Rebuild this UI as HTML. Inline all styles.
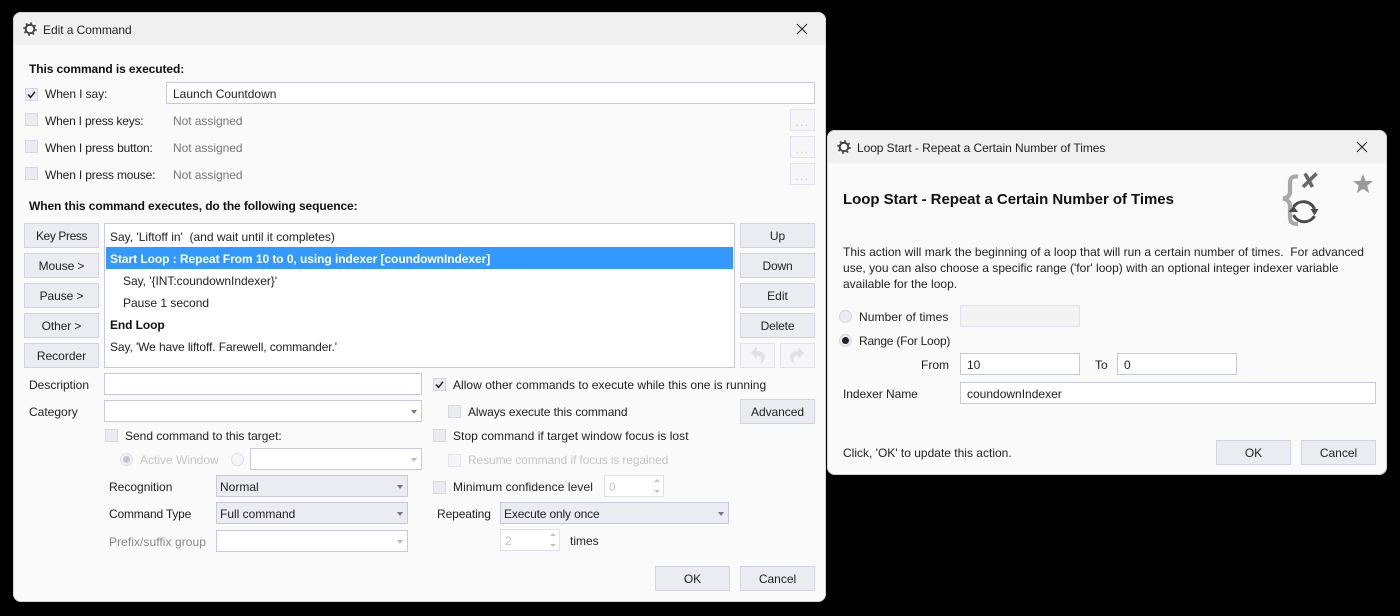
<!DOCTYPE html>
<html><head><meta charset="utf-8"><style>
html,body{margin:0;padding:0;background:#000;width:1400px;height:616px;overflow:hidden}
body{position:relative;font-family:"Liberation Sans",sans-serif;font-size:12px;color:#222}
div{box-sizing:border-box}
.w{position:absolute;background:#fafafa;border-radius:8px;overflow:hidden}
.o{position:absolute;border-radius:8px;border:1px solid #d4d4d4}
.t{position:absolute;white-space:nowrap;line-height:16px;height:16px}
.b{font-weight:bold;color:#111;letter-spacing:-.09px}
.g{color:#777}.d{color:#c6c6c6}.p{color:#888}
.c{position:absolute;width:13px;height:13px;background:#ebebf2;border:1px solid #d6d6e4}
.c.x{background:#f5f5f8;border-color:#e4e4ec}
.i{position:absolute;background:#fff;border:1px solid #c9c9dd;height:22px;line-height:22px;padding-left:6px;white-space:nowrap}
.s{background:#ebebf2;padding-left:3px}
.btn{position:absolute;width:75px;height:25px;background:#ebebf2;border:1px solid #d2d2e2;text-align:center;line-height:25px}
.dis{position:absolute;background:#f6f6f9;border:1px solid #e2e2ec;text-align:center;color:#ccc;letter-spacing:1.5px}
.a{position:absolute;width:0;height:0;border-left:3px solid transparent;border-right:3px solid transparent;border-top:4px solid #777}
.a.l{border-top-color:#bbb}
.r{position:absolute;width:13px;height:13px;border-radius:50%;background:#ebebf2;border:1px solid #d6d6e4}
svg{position:absolute;overflow:visible}
</style></head><body>

<div class="w" style="left:13px;top:12px;width:813px;height:590px"></div>
<div class="w" style="left:13px;top:12px;width:813px;height:33px;background:#f0f0f0;border-radius:8px 8px 0 0"></div>
<div class="o" style="left:13px;top:12px;width:813px;height:590px"></div>

<svg style="left:23px;top:22px" width="14" height="14" viewBox="0 0 14 14"><circle cx="7" cy="7" r="7.500" fill="#fff"/><circle cx="7" cy="7" r="4.300" fill="none" stroke="#444" stroke-width="2"/><circle cx="7" cy="7" r="5.800" fill="none" stroke="#555" stroke-width="2.200" stroke-dasharray="2 2.550"/></svg>
<div class="t" style="left:43px;top:22px;letter-spacing:-.05px">Edit a Command</div>
<svg style="left:797px;top:24px" width="10" height="10" viewBox="0 0 10 10"><path d="M0 0L10 10M10 0L0 10" stroke="#222" stroke-width="1.1"/></svg>

<div class="t b" style="left:29px;top:61px">This command is executed:</div>
<div class="c" style="left:25px;top:88px"></div>
<svg style="left:25px;top:88px" width="13" height="13" viewBox="0 0 13 13"><path d="M3 6.500L5.500 9.300L10 3.800" fill="none" stroke="#222" stroke-width="1.5"/></svg>
<div class="t" style="left:45px;top:86px;letter-spacing:-.1px">When I say:</div>
<div class="i" style="left:166px;top:82px;width:649px">Launch Countdown</div>

<div class="c" style="left:25px;top:113px"></div>
<div class="t" style="left:45px;top:113px;letter-spacing:-.2px">When I press keys:</div>
<div class="t g" style="left:173px;top:113px;letter-spacing:-.05px">Not assigned</div>
<div class="dis" style="left:790px;top:109px;width:25px;height:22px;line-height:24px">...</div>

<div class="c" style="left:25px;top:140px"></div>
<div class="t" style="left:45px;top:140px;letter-spacing:-.15px">When I press button:</div>
<div class="t g" style="left:173px;top:140px;letter-spacing:-.05px">Not assigned</div>
<div class="dis" style="left:790px;top:136px;width:25px;height:22px;line-height:24px">...</div>

<div class="c" style="left:25px;top:167px"></div>
<div class="t" style="left:45px;top:167px;letter-spacing:-.16px">When I press mouse:</div>
<div class="t g" style="left:173px;top:167px;letter-spacing:-.05px">Not assigned</div>
<div class="dis" style="left:790px;top:163px;width:25px;height:22px;line-height:24px">...</div>

<div class="t b" style="left:29px;top:198px">When this command executes, do the following sequence:</div>

<div class="btn" style="left:24px;top:223px;letter-spacing:-.4px">Key Press</div>
<div class="btn" style="left:24px;top:253px;letter-spacing:-.1px">Mouse &gt;</div>
<div class="btn" style="left:24px;top:283px;letter-spacing:-.1px">Pause &gt;</div>
<div class="btn" style="left:24px;top:313px;letter-spacing:-.1px">Other &gt;</div>
<div class="btn" style="left:24px;top:343px">Recorder</div>

<div style="position:absolute;left:104px;top:223px;width:631px;height:145px;background:#fff;border:1px solid #c9c9dd"></div>
<div style="position:absolute;left:106px;top:247px;width:627px;height:22px;background:#3399ff"></div>
<div class="t" style="left:110px;top:229px">Say, 'Liftoff in'&nbsp; (and wait until it completes)</div>
<div class="t b" style="left:110px;top:251px;color:#fff;letter-spacing:-.06px">Start Loop : Repeat From 10 to 0, using indexer [coundownIndexer]</div>
<div class="t" style="left:123px;top:273px;letter-spacing:-.04px">Say, '{INT:coundownIndexer}'</div>
<div class="t" style="left:123px;top:295px">Pause 1 second</div>
<div class="t b" style="left:110px;top:317px">End Loop</div>
<div class="t" style="left:110px;top:339px;letter-spacing:-.1px">Say, 'We have liftoff. Farewell, commander.'</div>

<div class="btn" style="left:740px;top:223px">Up</div>
<div class="btn" style="left:740px;top:253px;letter-spacing:-.15px">Down</div>
<div class="btn" style="left:740px;top:283px">Edit</div>
<div class="btn" style="left:740px;top:313px;letter-spacing:-.15px">Delete</div>
<div class="dis" style="left:740px;top:343px;width:35px;height:25px"></div>
<div class="dis" style="left:780px;top:343px;width:35px;height:25px"></div>
<svg style="left:750px;top:346px" width="16" height="19" viewBox="0 0 16 19"><path d="M7 1L1 7L7 13V9.500C10 9.500 11.500 11 11.500 13.500C11.500 15 11 17 9.500 18C13 17 15 14.500 15 11C15 7.500 12 5 7 5Z" fill="#e2e2e2"/></svg>
<svg style="left:789px;top:346px" width="16" height="19" viewBox="0 0 16 19"><path d="M9 1L15 7L9 13V9.500C6 9.500 4.500 11 4.500 13.500C4.500 15 5 17 6.500 18C3 17 1 14.500 1 11C1 7.500 4 5 9 5Z" fill="#e2e2e2"/></svg>

<div class="t" style="left:29px;top:377px">Description</div>
<div class="i" style="left:104px;top:373px;width:318px"></div>
<div class="t" style="left:29px;top:404px">Category</div>
<div class="i" style="left:104px;top:400px;width:318px"></div>
<div class="a" style="left:411px;top:410px"></div>

<div class="c" style="left:433px;top:378px"></div>
<svg style="left:433px;top:378px" width="13" height="13" viewBox="0 0 13 13"><path d="M3 6.500L5.500 9.300L10 3.800" fill="none" stroke="#222" stroke-width="1.5"/></svg>
<div class="t" style="left:453px;top:377px;letter-spacing:.03px">Allow other commands to execute while this one is running</div>
<div class="c" style="left:448px;top:405px"></div>
<div class="t" style="left:468px;top:404px;letter-spacing:-.07px">Always execute this command</div>
<div class="btn" style="left:740px;top:399px;letter-spacing:-.05px">Advanced</div>

<div class="c" style="left:105px;top:429px"></div>
<div class="t" style="left:125px;top:428px">Send command to this target:</div>
<div class="r" style="left:120px;top:453px;background:#f1f1f6;border-color:#dedee8"></div>
<div style="position:absolute;left:123px;top:456px;width:7px;height:7px;border-radius:50%;background:#c4c4cc"></div>
<div class="t d" style="left:140px;top:452px">Active Window</div>
<div class="r" style="left:231px;top:453px;background:#f6f6f9;border-color:#dedee8"></div>
<div class="i" style="left:250px;top:448px;width:172px"></div>
<div class="a l" style="left:411px;top:458px"></div>

<div class="c" style="left:433px;top:429px"></div>
<div class="t" style="left:453px;top:428px;letter-spacing:.05px">Stop command if target window focus is lost</div>
<div class="c x" style="left:448px;top:454px"></div>
<div class="t d" style="left:468px;top:452px;letter-spacing:-.11px">Resume command if focus is regained</div>

<div class="t" style="left:109px;top:479px">Recognition</div>
<div class="i s" style="left:216px;top:475px;width:192px">Normal</div>
<div class="a" style="left:397px;top:485px"></div>
<div class="t" style="left:109px;top:506px;letter-spacing:-.2px">Command Type</div>
<div class="i s" style="left:216px;top:502px;width:192px">Full command</div>
<div class="a" style="left:397px;top:512px"></div>
<div class="t p" style="left:109px;top:534px;letter-spacing:.06px">Prefix/suffix group</div>
<div class="i" style="left:216px;top:530px;width:192px"></div>
<div class="a l" style="left:397px;top:540px"></div>

<div class="c" style="left:433px;top:481px"></div>
<div class="t" style="left:453px;top:479px;letter-spacing:.08px">Minimum confidence level</div>
<div class="i d" style="left:604px;top:475px;width:60px;border-color:#e0e0ea;padding-left:4px">0</div>
<div class="t" style="left:437px;top:506px;letter-spacing:-.1px">Repeating</div>
<div class="i s" style="left:500px;top:502px;width:229px;letter-spacing:-.15px">Execute only once</div>
<div class="a" style="left:718px;top:512px"></div>
<div class="i d" style="left:500px;top:529px;width:60px;border-color:#e0e0ea;padding-left:4px">2</div>
<svg style="left:548px;top:530px" width="10" height="20" viewBox="0 0 10 20"><path d="M2 6L5 3L8 6ZM2 14L5 17L8 14Z" fill="#c4c4c4"/></svg>
<svg style="left:652px;top:476px" width="10" height="20" viewBox="0 0 10 20"><path d="M2 6L5 3L8 6ZM2 14L5 17L8 14Z" fill="#c4c4c4"/></svg>
<div class="t" style="left:570px;top:533px">times</div>
<div class="btn" style="left:655px;top:566px">OK</div>
<div class="btn" style="left:740px;top:566px">Cancel</div>

<div class="w" style="left:827px;top:130px;width:560px;height:345px"></div>
<div class="w" style="left:827px;top:130px;width:560px;height:33px;background:#f0f0f0;border-radius:8px 8px 0 0"></div>
<div class="o" style="left:827px;top:130px;width:560px;height:345px"></div>
<svg style="left:837px;top:140px" width="14" height="14" viewBox="0 0 14 14"><circle cx="7" cy="7" r="7.500" fill="#fff"/><circle cx="7" cy="7" r="4.300" fill="none" stroke="#444" stroke-width="2"/><circle cx="7" cy="7" r="5.800" fill="none" stroke="#555" stroke-width="2.200" stroke-dasharray="2 2.550"/></svg>
<div class="t" style="left:857px;top:140px;letter-spacing:-.07px">Loop Start - Repeat a Certain Number of Times</div>
<svg style="left:1357px;top:142px" width="10" height="10" viewBox="0 0 10 10"><path d="M0 0L10 10M10 0L0 10" stroke="#222" stroke-width="1.1"/></svg>

<div class="t b" style="left:843px;top:191px;font-size:15px;line-height:18px;height:18px;letter-spacing:-.05px">Loop Start - Repeat a Certain Number of Times</div>

<svg style="left:1280px;top:170px" width="42" height="58" viewBox="0 0 42 58">
<path d="M18 6.500C12 6 10 8 10 13V22C10 26 7 28 3 28.500C7 29 10 32 10 36V47C10 52 12 54 18 54" fill="none" stroke="#a8a8a8" stroke-width="4.200"/>
<path d="M25 3.500L32.500 17M36.500 3.500L23 17" fill="none" stroke="#666" stroke-width="3.600"/>
<path d="M13.500 37A12 12 0 0 1 34.500 39" fill="none" stroke="#4a4a4a" stroke-width="3"/>
<path d="M30.500 39H38.500L34.500 45.500Z" fill="#4a4a4a"/>
<path d="M34.500 46A12 12 0 0 1 13.500 45" fill="none" stroke="#4a4a4a" stroke-width="3"/>
<path d="M8.500 42H18L13.500 36Z" fill="#4a4a4a"/>
</svg>
<svg style="left:1353px;top:174px" width="20" height="19" viewBox="0 0 21 20"><path d="M10.500 0L13.200 7.200L21 7.500L14.900 12.300L17 20L10.500 15.600L4 20L6.100 12.300L0 7.500L7.800 7.200Z" fill="#999"/></svg>

<div class="t" style="left:843px;top:244px;letter-spacing:.02px">This action will mark the beginning of a loop that will run a certain number of times.&nbsp; For advanced</div>
<div class="t" style="left:843px;top:260px;letter-spacing:.02px">use, you can also choose a specific range ('for' loop) with an optional integer indexer variable</div>
<div class="t" style="left:843px;top:276px">available for the loop.</div>

<div class="r" style="left:839px;top:310px"></div>
<div class="t" style="left:859px;top:309px;letter-spacing:.1px">Number of times</div>
<div class="i" style="left:960px;top:305px;width:120px;background:#f3f3f3;border-color:#e0e0ea"></div>
<div class="r" style="left:839px;top:334px"></div>
<div style="position:absolute;left:842px;top:337px;width:7px;height:7px;border-radius:50%;background:#222"></div>
<div class="t" style="left:859px;top:333px;letter-spacing:-.22px">Range (For Loop)</div>
<div class="t" style="left:921px;top:357px">From</div>
<div class="i" style="left:960px;top:353px;width:120px">10</div>
<div class="t" style="left:1095px;top:357px">To</div>
<div class="i" style="left:1117px;top:353px;width:120px">0</div>
<div class="t" style="left:843px;top:386px;letter-spacing:-.05px">Indexer Name</div>
<div class="i" style="left:960px;top:382px;width:416px">coundownIndexer</div>
<div class="t" style="left:843px;top:445px">Click, 'OK' to update this action.</div>
<div class="btn" style="left:1216px;top:440px">OK</div>
<div class="btn" style="left:1301px;top:440px">Cancel</div>
</body></html>
